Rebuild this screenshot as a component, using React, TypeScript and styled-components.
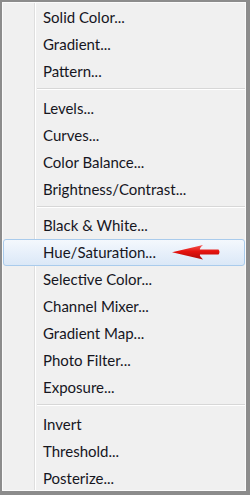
import styled, { createGlobalStyle } from 'styled-components';

type Entry = { label: string } | { separator: true };

const entries: Entry[] = [
  { label: 'Solid Color...' },
  { label: 'Gradient...' },
  { label: 'Pattern...' },
  { separator: true },
  { label: 'Levels...' },
  { label: 'Curves...' },
  { label: 'Color Balance...' },
  { label: 'Brightness/Contrast...' },
  { separator: true },
  { label: 'Black & White...' },
  { label: 'Hue/Saturation...' },
  { label: 'Selective Color...' },
  { label: 'Channel Mixer...' },
  { label: 'Gradient Map...' },
  { label: 'Photo Filter...' },
  { label: 'Exposure...' },
  { separator: true },
  { label: 'Invert' },
  { label: 'Threshold...' },
  { label: 'Posterize...' },
];

const ACTIVE = 'Hue/Saturation...';

const GlobalStyle = createGlobalStyle`
  html, body {
    margin: 0;
    padding: 0;
    background: #f0f0f0;
  }
`;

const PointerArrow = () => (
  <svg width="50" height="16" viewBox="0 0 50 16">
    <defs>
      <linearGradient id="arrowFill" x1="0" y1="0" x2="0" y2="1">
        <stop offset="0" stopColor="#f25550" />
        <stop offset="0.45" stopColor="#e5130f" />
        <stop offset="1" stopColor="#b00b09" />
      </linearGradient>
    </defs>
    <path
      d="M1 8.3 L32 1 Q28 4.5 29 5.6 L47.5 5.6 Q49.5 8 47.5 10.6 L29 10.6 Q28 11.6 32 15.4 Z"
      fill="url(#arrowFill)"
    />
  </svg>
);

const App = () => {
  return (
    <>
      <GlobalStyle />
      <Menu>
        {entries.map((entry, i) =>
          'separator' in entry ? (
            <Separator key={i} />
          ) : (
            <Item key={i} $active={entry.label === ACTIVE}>
              <Label>{entry.label}</Label>
              {entry.label === ACTIVE && (
                <ArrowWrapper>
                  <PointerArrow />
                </ArrowWrapper>
              )}
            </Item>
          )
        )}
      </Menu>
    </>
  );
};

const Menu = styled.div`
  box-sizing: border-box;
  width: 250px;
  height: 495px;
  display: flex;
  flex-direction: column;
  padding: 1.5px 1px 0 1px;
  border-style: solid;
  border-color: #8c8c8c;
  border-width: 2px 4px 4px 2px;
  box-shadow: inset 1px 1px 0 #fbfbfb, inset -1px -1px 0 #fbfbfb;
  background: linear-gradient(
    to right,
    #f0f0f0 32px,
    #dedede 32px,
    #dedede 33px,
    #ffffff 33px,
    #ffffff 34px,
    #f0f0f0 34px
  );
  font-family: 'Lato', 'Liberation Sans', sans-serif;
`;

const Item = styled.div<{ $active: boolean }>`
  position: relative;
  box-sizing: border-box;
  height: 27px;
  flex: none;
  display: flex;
  align-items: center;
  padding-left: ${(props) => (props.$active ? '39px' : '40px')};
  border-radius: 3px;
  border: ${(props) => (props.$active ? '1px solid #a9cbec' : 'none')};
  background: ${(props) =>
    props.$active
      ? 'linear-gradient(to bottom, #f4f8fd 0%, #e6effa 55%, #dbe8f7 100%)'
      : 'transparent'};
`;

const Label = styled.span`
  font-size: 15px;
  color: #16161e;
  white-space: nowrap;
`;

const ArrowWrapper = styled.div`
  position: absolute;
  left: 167px;
  top: 4px;
  display: flex;
`;

const Separator = styled.div`
  flex: none;
  height: 9.5px;
  margin-left: 34px;
  display: flex;
  flex-direction: column;
  justify-content: center;

  &::before {
    content: '';
    height: 1px;
    background: #d7d7d7;
  }

  &::after {
    content: '';
    height: 1px;
    background: #ffffff;
  }
`;

export default App;
